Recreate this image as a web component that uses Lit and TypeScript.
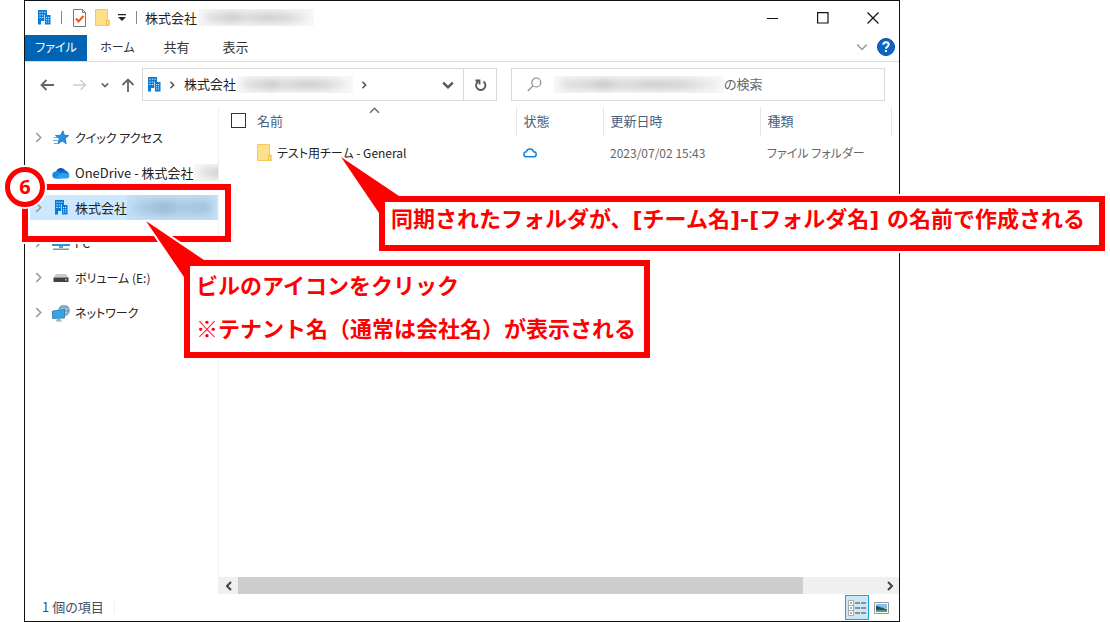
import { LitElement, html, css, svg, nothing } from "lit";
import { customElement, state } from "lit/decorators.js";
import { classMap } from "lit/directives/class-map.js";

const building = html`<svg class="building" width="13" height="15" viewBox="0 0 13 15" aria-hidden="true">
  <path fill="#0a7ad8" d="M0 0h9v5h3.500v9.500H7V11H3v3.500H0z" />
  <path fill="#d5ebfc" d="M1.300 1.800h1.400v1H1.300zM3.800 1.800h1.400v1H3.800zM6.300 1.800h1.400v1H6.300zM1.300 4.400h1.400v1H1.300zM3.800 4.400h1.400v1H3.800zM1.300 7h1.400v1H1.300zM3.800 7h1.400v1H3.800zM6 4.400h.8v10H6zM8 7h1.100v1H8zM10 7h1.100v1H10zM8 9.300h1.100v1H8zM10 9.300h1.100v1H10zM8 11.600h1.100v1H8zM10 11.600h1.100v1H10z" />
</svg>`;

const folder = html`<svg width="15" height="17" viewBox="0 0 15 17" aria-hidden="true">
  <path fill="#ffe08a" stroke="#f3cb5c" d="M.5.5h12v10.500h1.500v5.500H.5z" />
  <path fill="#f0c24b" d="M11 11h3.500v6H11z" /><path fill="#ffe08a" d="M12 12h1.500v3.500H12z" />
</svg>`;

const chevron = (dir: "right" | "down" | "left" | "up", size = 10, width = 1.5) => {
  const turn = { right: 0, down: 90, left: 180, up: 270 }[dir];
  return html`<svg width=${size} height=${size} viewBox="0 0 10 10" aria-hidden="true">
    ${svg`<path d="M3 1l4 4-4 4" transform="rotate(${turn} 5 5)" fill="none" stroke="currentColor" stroke-width=${width} />`}
  </svg>`;
};

const star = html`<svg width="16" height="16" viewBox="0 0 16 16" aria-hidden="true">
  <path fill="#2b8fe0" stroke="#1474c4" stroke-width=".8" d="M10 .8l1.400 4.500 4.300.3-3.500 3 1 5.200-3.900-2.700-4.600 2.900 1.700-5.200L2.500 5.500l5-.2z" />
  <path stroke="#56aeea" stroke-width="1.200" d="M1 7.500h4M0 10.500h5M1 13.500h3" />
</svg>`;

const oneDrive = html`<svg width="18" height="12" viewBox="0 0 18 12" aria-hidden="true">
  <path fill="#0f5fb8" d="M4 5a5.200 5.200 0 0 1 9.500-1.500L10 8 3 7z" />
  <path fill="#1a8ae0" d="M3.800 4.500c2-.6 3.500 0 5 1L14 9 9 11.500H3.800a3.500 3.500 0 0 1 0-7z" />
  <path fill="#1072ca" d="M9 6c1.500-2.500 3.500-3 5-2.300A4 4 0 0 1 17 7L15 10z" />
  <path fill="#2ba0f0" d="M3 11l7-5.200 6.500 1A2.700 2.700 0 0 1 15 11.500H3.500z" />
</svg>`;

const pc = html`<svg width="18" height="16" viewBox="0 0 18 16" aria-hidden="true">
  <path fill="#2f9be0" stroke="#5d7d94" d="M.5 1.500h17v9H.5z" /><path fill="#7a98ac" d="M7 11h4v2H7zM1 13.500h16V15H1z" />
</svg>`;

const drive = html`<svg width="16" height="10" viewBox="0 0 16 10" aria-hidden="true">
  <path fill="#c9c9c9" d="M3 1h10l2.500 3.500H.5z" /><path fill="#3e4244" d="M.5 4.500h15V9H.5z" /><path fill="#55d860" d="M12 6h2v1.500h-2z" />
</svg>`;

const network = html`<svg width="18" height="18" viewBox="0 0 18 18" aria-hidden="true">
  <circle cx="12" cy="6.500" r="5.800" fill="#6f9fbe" />
  <path fill="none" stroke="#b5d3e4" stroke-width=".8" d="M6.500 5h11M6.500 9h11M12 1c-3 3-3 8 0 11M12 1c3 3 3 8 0 11" />
  <path fill="#32a4ea" stroke="#2f78aa" stroke-width=".8" d="M.5 7l12-1.500v8.500l-12 .5z" />
  <path fill="#8fb2c6" d="M5 15h3l2 2.500H4z" />
</svg>`;

interface Place {
  name: string;
  icon: unknown;
  expandable: boolean;
  masked?: boolean;
}

const places: Place[] = [
  { name: "クイック アクセス", icon: star, expandable: true },
  { name: "OneDrive - 株式会社", icon: oneDrive, expandable: false, masked: true },
  { name: "株式会社", icon: building, expandable: true, masked: true },
  { name: "PC", icon: pc, expandable: true },
  { name: "ボリューム (E:)", icon: drive, expandable: true },
  { name: "ネットワーク", icon: network, expandable: true },
];

const kanaOnly = (text: string) => !/[\u4e00-\u9fff]/.test(text);

const tabs = ["ホーム", "共有", "表示"];

@customElement("call-out")
class CallOut extends LitElement {
  static styles = css`
    :host { display: block; box-shadow: 0 0 0 2px #fff; }
    .tail { position: absolute; left: -43px; top: -43px; overflow: visible; }
    .tail polygon { fill: #f00; stroke: #fff; stroke-width: 4px; paint-order: stroke; }
    .body {
      position: relative;
      box-sizing: border-box;
      height: 100%;
      border: 6px solid #f00;
      background: #fff;
      color: #f00;
      padding: 0 6px;
      font: 700 22px/36px var(--note-font, "Noto Sans CJK JP"), "Noto Sans CJK JP", sans-serif;
      white-space: nowrap;
    }
  `;
  render() {
    return html`<svg class="tail" width="80" height="80" aria-hidden="true">
        <polygon points="5,4 63,43 63,60 43,60"></polygon>
      </svg>
      <div class="body"><slot></slot></div>`;
  }
}

@customElement("app-root")
class AppRoot extends LitElement {
  @state() private current = 2;
  @state() private view = 0;

  static styles = css`
    :host {
      display: block;
      position: relative;
      min-height: 100vh;
      background: #fff;
      color: #222;
      font: 13px/20px "Noto Sans CJK JP", sans-serif;
      font-feature-settings: "palt";
      overflow: hidden;
    }
    * { box-sizing: border-box; }
    svg { display: block; flex: none; }
    button {
      display: grid;
      place-items: center;
      border: 0;
      padding: 0;
      background: none;
      color: inherit;
      font: inherit;
      font-feature-settings: inherit;
    }
    a { color: inherit; text-decoration: none; }
    .kana { font-size: 12px; }
    .window {
      display: flex;
      flex-direction: column;
      min-height: 100vh;
      margin: 0 210px 0 24px;
      border: 1px solid #111;
      background: #fff;
    }
    .smudge {
      flex: none;
      width: 116px;
      height: 17px;
      overflow: hidden;
      background: #f8f8f8;
    }
    .smudge::before {
      content: "";
      display: block;
      height: 9px;
      margin: 4px 6px;
      filter: blur(4px);
      background: linear-gradient(90deg, #ddd, #ccc 20%, #bbb 28%, #d4d4d4 38%, #c4c4c4 60%, #ccc 78%, #eee);
    }
    .titlebar { display: flex; align-items: center; height: 33px; padding-left: 13px; }
    .rule { width: 1px; height: 13px; background: #888; }
    .quick { display: flex; align-items: center; gap: 10px; }
    .quick .pair { display: flex; align-items: center; gap: 8px; }
    .title { margin: 0 1px 0 8px; font-weight: 400; font-size: 13px; }
    .controls { display: flex; margin: 0 1px 0 auto; }
    .controls button { width: 50px; height: 32px; }
    .tabs { display: flex; align-items: center; height: 28px; border-bottom: 1px solid #dadada; }
    .tabs button { height: 26px; width: 59px; padding-bottom: 2px; color: #333; }
    .tabs .file { width: 62px; margin-right: 1px; background: #0064b4; color: #fff; }
    .tabs .fold { width: 24px; margin-left: auto; color: #999; }
    .tabs .help { width: 24px; margin-right: 1px; }
    .bar { display: flex; align-items: center; height: 45px; padding-right: 14px; }
    .nav { display: flex; align-items: center; width: 117px; color: #666; }
    .nav button { height: 30px; width: 32px; }
    .nav .back { width: 44px; }
    .nav .next { width: 21px; color: #ccc; }
    .nav .recent { width: 30px; }
    .nav .upward { width: 16px; }
    .address { display: flex; flex: 1 1 355px; align-items: center; height: 33px; border: 1px solid #d9d9d9; padding-left: 5px; color: #555; }
    .address .crumb { margin: 0 1px; padding-bottom: 2px; color: #222; }
    .address .step { width: 22px; }
    .address .drop { width: 30px; height: 31px; margin-left: auto; }
    .address .refresh { width: 33px; height: 31px; border-left: 1px solid #d9d9d9; }
    .search { display: flex; flex: 1 1 374px; align-items: center; height: 33px; margin-left: 14px; border: 1px solid #d9d9d9; padding-left: 15px; }
    .search .smudge { width: 170px; margin-left: 12px; }
    .search input { flex: 1; min-width: 0; border: 0; padding: 0 0 2px; outline: 0; background: none; font: inherit; }
    .search input::placeholder { color: #666; opacity: 1; }
    .main { display: flex; flex: 1; min-height: 0; }
    .places { width: 194px; margin: 0; padding: 18px 0 0; border-right: 1px solid #f0f0f0; list-style: none; }
    .places li { display: flex; align-items: center; height: 25px; margin: 0 0 10px 5px; overflow: hidden; }
    .places .current { background: #cce8ff; }
    .places .toggle { flex: none; width: 16px; height: 25px; color: #999; }
    .places a { display: flex; flex: none; align-items: center; margin-left: 5px; white-space: nowrap; }
    .places .icon { display: grid; place-items: center; width: 20px; margin-right: 4px; }
    .places .smudge { width: 90px; }
    .places .current .smudge { height: 25px; background: #c3e0f7; }
    .places .current .smudge::before { height: 15px; margin: 5px 6px; background: linear-gradient(90deg, #b4d2ea, #98b8d4 40%, #a9c8e2 60%, #9fc0dc); }
    .files { display: flex; flex: 1; flex-direction: column; min-width: 0; }
    table { width: 673px; border-collapse: collapse; table-layout: fixed; font-size: 12px; }
    th { position: relative; height: 29px; padding: 0 0 2px 7px; border-right: 1px solid #e5e5e5; color: #4c607a; font-weight: 400; font-size: 13px; text-align: left; }
    td { height: 33px; padding: 0 0 0 7px; color: #666; }
    .name { width: 297px; }
    .status { width: 87px; }
    .date { width: 157px; }
    .cell { display: flex; align-items: center; gap: 11px; padding-left: 5px; }
    .cell input { appearance: none; width: 15px; height: 15px; margin: 0; border: 1px solid #333; background: #fff; }
    .entry { gap: 5px; padding-left: 31px; color: #222; }
    .sort { position: absolute; left: 150px; top: -2px; color: #666; }
    .scroll { display: flex; height: 17px; margin-top: auto; background: #f0f0f0; color: #444; }
    .scroll button { width: 19px; height: 17px; }
    .scroll .track { flex: 1; }
    .scroll .thumb { width: 88%; height: 17px; background: #cdcdcd; }
    .foot { display: flex; align-items: center; height: 27px; padding: 0 6px 0 17px; color: #3c4f69; }
    .foot .count { padding-bottom: 2px; }
    .foot .rule { margin-left: 10px; background: #eee; }
    .views { display: flex; margin-left: auto; }
    .views button { width: 24px; height: 25px; border: 1px solid transparent; }
    .views .on { border-color: #26a0da; background: #cbe8f6; }
    .target { position: absolute; left: 22px; top: 184px; width: 209px; height: 58px; border: 6px solid #f00; outline: 2px solid #fff; }
    .step-number {
      position: absolute; left: 5px; top: 167px; width: 40px; height: 40px;
      border: 5px solid #f00; border-radius: 50%; background: #fff; box-shadow: 0 0 0 2px #fff;
      color: #f00; font: 700 20px/29px "Noto Sans", sans-serif; text-align: center;
    }
    .building-note { position: absolute; left: 184px; top: 260px; width: 466px; height: 98px; }
    .folder-note { position: absolute; left: 379px; right: 5px; top: 196px; height: 55px; --note-font: "DejaVu Sans"; }
    .note-line { margin: 0 0 7px; }
  `;

  private place(p: Place, i: number) {
    return html`<li class=${classMap({ current: i === this.current })}>
      ${p.expandable
        ? html`<button class="toggle" aria-label="${p.name}を展開">${chevron("right", 11, 1.4)}</button>`
        : html`<span class="toggle"></span>`}
      <a class=${classMap({ kana: kanaOnly(p.name) })} href="#" @click=${(e: Event) => { e.preventDefault(); this.current = i; }}>
        <span class="icon">${p.icon}</span>${p.name}${p.masked ? html`<span class="smudge"></span>` : nothing}
      </a>
    </li>`;
  }

  render() {
    return html`
      <div class="window">
        <header class="titlebar">
          <div class="quick">
            ${building}
            <span class="rule"></span>
            <div class="pair">
              <button aria-label="プロパティ">
                <svg width="15" height="18" viewBox="0 0 15 18"><path fill="#fff" stroke="#777" d="M1.500.5h9l3 3v14h-12z" /><path fill="none" stroke="#777" d="M10.500.5v3h3" /><path fill="none" stroke="#e8571c" stroke-width="2" d="M4 9.500l2.500 3 5-5.500" /></svg>
              </button>
              <button aria-label="新しいフォルダー">${folder}</button>
              <button aria-label="カスタマイズ">
                <svg width="8" height="8" viewBox="0 0 8 8"><path fill="#222" d="M0 0h8v1.300H0zM0 3h8L4 7z" /></svg>
              </button>
            </div>
            <span class="rule"></span>
          </div>
          <h1 class="title">株式会社</h1>
          <span class="smudge"></span>
          <div class="controls">
            <button aria-label="最小化"><svg width="12" height="12"><path stroke="#111" d="M0 6.500h11" /></svg></button>
            <button aria-label="最大化"><svg width="12" height="12"><path fill="none" stroke="#111" stroke-width="1.200" d="M.6.6h10.400v10.400H.6z" /></svg></button>
            <button aria-label="閉じる"><svg width="12" height="12"><path stroke="#111" stroke-width="1.200" d="M.5.5l11 11M11.500.5l-11 11" /></svg></button>
          </div>
        </header>

        <nav class="tabs">
          <button class="file kana">ファイル</button>
          ${tabs.map((t) => html`<button class=${classMap({ kana: kanaOnly(t) })}>${t}</button>`)}
          <button class="fold" aria-label="リボンの展開">${chevron("down", 12, 1.2)}</button>
          <button class="help" aria-label="ヘルプ">
            <svg width="18" height="18" viewBox="0 0 18 18"><circle cx="9" cy="9" r="8.500" fill="#0a66c8" stroke="#0a4f9c" /><path fill="none" stroke="#fff" stroke-width="2" d="M6.300 6.800c0-3.400 5.400-3.200 5.400-.2 0 2-2.700 2-2.700 4.200" /><path fill="#fff" d="M8 12h2v2H8z" /></svg>
          </button>
        </nav>

        <div class="bar">
          <div class="nav">
            <button class="back" aria-label="戻る"><svg width="14" height="12" viewBox="0 0 14 12"><path fill="none" stroke="currentColor" stroke-width="1.800" d="M14 6H1.500M6.500 1l-5 5 5 5" /></svg></button>
            <button class="next" aria-label="進む"><svg width="14" height="12" viewBox="0 0 14 12"><path fill="none" stroke="currentColor" stroke-width="1.300" d="M0 6h12.500M7.500 1l5 5-5 5" /></svg></button>
            <button class="recent" aria-label="最近表示した場所">${chevron("down", 8, 2)}</button>
            <button class="upward" aria-label="上へ"><svg width="14" height="14" viewBox="0 0 14 14"><path fill="none" stroke="currentColor" stroke-width="1.800" d="M7 14V2M1.500 7L7 1.500 12.500 7" /></svg></button>
          </div>
          <div class="address">
            ${building}
            <button class="step" aria-label="階層">${chevron("right", 8, 2)}</button>
            <a class="crumb" href="#">株式会社</a>
            <span class="smudge"></span>
            <button class="step" aria-label="下の階層">${chevron("right", 8, 2)}</button>
            <button class="drop" aria-label="履歴">${chevron("down", 12, 2)}</button>
            <button class="refresh" aria-label="更新">
              <svg width="13" height="14" viewBox="0 0 13 14"><path fill="none" stroke="currentColor" stroke-width="1.800" d="M9.500 3.500a4.700 4.700 0 1 1-5.500 0M1.500 2.500h4v4" /></svg>
            </button>
          </div>
          <label class="search">
            <svg width="15" height="15" viewBox="0 0 15 15" aria-hidden="true"><circle cx="9.300" cy="5.500" r="4.500" fill="none" stroke="#888" stroke-width="1.200" /><path stroke="#888" stroke-width="1.200" d="M6 8.800L.8 14" /></svg>
            <span class="smudge"></span>
            <input type="search" placeholder="の検索" aria-label="検索" />
          </label>
        </div>

        <div class="main">
          <ul class="places">${places.map((p, i) => this.place(p, i))}</ul>
          <section class="files">
            <table>
              <thead>
                <tr>
                  <th class="name">
                    <span class="sort">${chevron("up", 11, 1.2)}</span>
                    <div class="cell"><input type="checkbox" aria-label="すべて選択" />名前</div>
                  </th>
                  <th class="status">状態</th>
                  <th class="date">更新日時</th>
                  <th>種類</th>
                </tr>
              </thead>
              <tbody>
                <tr>
                  <td><div class="cell entry">${folder}テスト用チーム - General</div></td>
                  <td><svg width="14" height="11" viewBox="0 0 14 11" role="img" aria-label="オンライン"><path fill="none" stroke="#1583dd" stroke-width="1.500" d="M3.500 9.800a2.500 2.500 0 0 1-.2-5 3.800 3.800 0 0 1 7.300 0 2.500 2.500 0 0 1 .2 5z" /></svg></td>
                  <td>2023/07/02 15:43</td>
                  <td>ファイル フォルダー</td>
                </tr>
              </tbody>
            </table>
            <div class="scroll">
              <button aria-label="左へ">${chevron("left", 10, 2)}</button>
              <div class="track"><div class="thumb"></div></div>
              <button aria-label="右へ">${chevron("right", 10, 2)}</button>
            </div>
          </section>
        </div>

        <footer class="foot">
          <span class="count">1 個の項目</span><span class="rule"></span>
          <div class="views">
            <button class=${classMap({ on: this.view === 0 })} aria-label="詳細" @click=${() => (this.view = 0)}>
              <svg width="18" height="16" viewBox="0 0 18 16"><path fill="#fff" stroke="#999" stroke-width=".8" d="M.5.5h5v15h-5zM.5 5.500h5M.5 10.500h5" /><path stroke="#777" stroke-width="1.300" stroke-dasharray="5 1" d="M7 3h11M7 8h11M7 13h11" /><path fill="#666" d="M2.300 2.300h1.400v1.400H2.300z" /><path fill="#27e" d="M2.300 7.300h1.400v1.400H2.300z" /><path fill="#e22" d="M2.300 12.300h1.400v1.400H2.300z" /></svg>
            </button>
            <button class=${classMap({ on: this.view === 1 })} aria-label="大アイコン" @click=${() => (this.view = 1)}>
              <svg width="15" height="12" viewBox="0 0 15 12"><path fill="#fff" stroke="#999" d="M.5.5h14v11H.5z" /><path fill="#7ec1ee" d="M2 2h11v4H2z" /><path fill="#1e4f7e" d="M2 4c3 0 5 2 11 3v3H2z" /><path fill="#5e9c6e" d="M2 8h11v2H2z" /></svg>
            </button>
          </div>
        </footer>
      </div>

      <div class="target"></div>
      <div class="step-number">6</div>
      <call-out class="building-note">
        <p class="note-line">ビルのアイコンをクリック</p>
        <p class="note-line">※テナント名（通常は会社名）が表示される</p>
      </call-out>
      <call-out class="folder-note">同期されたフォルダが、[チーム名]-[フォルダ名] の名前で作成される</call-out>
    `;
  }
}
